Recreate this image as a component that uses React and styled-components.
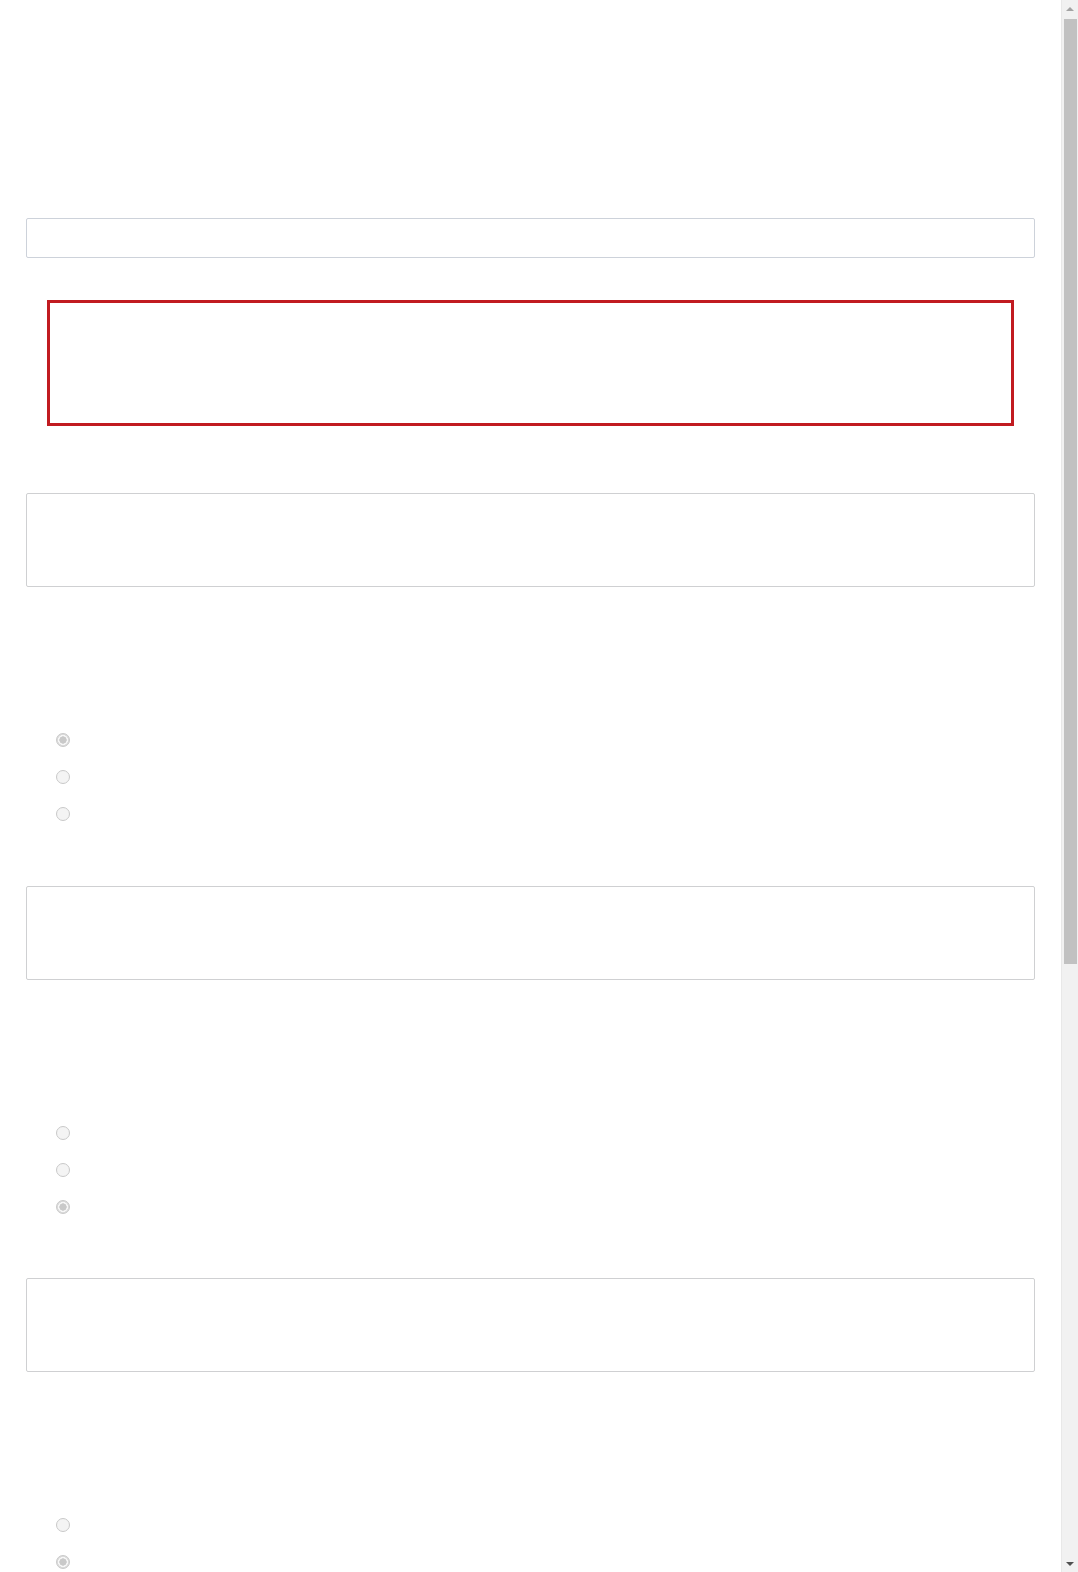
import React from "react";
import styled, { createGlobalStyle } from "styled-components";

const GlobalStyle = createGlobalStyle`
  html, body {
    margin: 0;
    padding: 0;
    background: #ffffff;
    font-family: "Open Sans", "Liberation Sans", Arial, sans-serif;
    color: #ffffff;
  }
  * { box-sizing: border-box; }
`;

const Page = styled.main`
  padding: 218px 43px 105px 26px;
  display: flex;
  flex-direction: column;
`;

const TextInput = styled.input`
  display: block;
  width: 100%;
  height: 40px;
  margin: 0;
  padding: 6px 12px;
  border: 1px solid #cdd2da;
  border-radius: 2px;
  background: #ffffff;
  font: inherit;
  outline: none;
`;

const AlertBox = styled.div`
  margin: 42px 21px 0 21px;
  height: 126px;
  border: 3px solid #c11b20;
  background: #ffffff;
`;

const Sections = styled.div`
  margin-top: 67px;
  display: flex;
  flex-direction: column;
  gap: 53px;
`;

const Section = styled.section`
  display: flex;
  flex-direction: column;
`;

const TextArea = styled.textarea`
  display: block;
  width: 100%;
  height: 94px;
  margin: 0;
  padding: 8px 12px;
  border: 1px solid #cfd0d2;
  border-radius: 2px;
  background: #ffffff;
  resize: none;
  font: inherit;
  outline: none;
`;

const RadioList = styled.div`
  margin-top: 134.5px;
  padding-left: 30px;
  display: flex;
  flex-direction: column;
`;

const RadioRow = styled.label`
  height: 37px;
  display: flex;
  align-items: center;
`;

const Radio = styled.input.attrs({ type: "radio", disabled: true })`
  appearance: none;
  -webkit-appearance: none;
  margin: 0;
  width: 14px;
  height: 14px;
  border-radius: 50%;
  border: 1px solid #c9c9c9;
  background: #f4f4f4;
  &:checked {
    background: radial-gradient(circle, #c9c9c9 0 3.4px, #f7f7f7 3.9px 4.8px, #dcdcdc 5.2px);
  }
`;

/* Fake browser scrollbar, drawn over the right edge of the viewport */
const ScrollTrack = styled.div`
  position: fixed;
  top: 0;
  right: 0;
  width: 17px;
  height: 100vh;
  background: #f1f1f1;
  border-left: 1px solid #e8e8e8;
  display: flex;
  flex-direction: column;
  align-items: center;
`;

const ArrowButton = styled.div`
  width: 100%;
  height: 17px;
  flex: none;
  display: flex;
  align-items: center;
  justify-content: center;
  &::before {
    content: "";
    width: 0;
    height: 0;
    border-left: 4px solid transparent;
    border-right: 4px solid transparent;
    ${({ $dir }) =>
      $dir === "up"
        ? "border-bottom: 4px solid #a3a3a3;"
        : "border-top: 4px solid #505050;"}
  }
`;

const TrackBody = styled.div`
  flex: 1;
  width: 100%;
  padding: 2px 1px 0 2px;
`;

const Thumb = styled.div`
  width: 100%;
  height: 945px;
  background: #c1c1c1;
`;

const sections = [0, 2, 1, 0, 2];

export default function App() {
  return (
    <>
      <GlobalStyle />
      <Page>
        <TextInput type="text" readOnly aria-label="input" />
        <AlertBox />
        <Sections>
          {sections.map((checked, s) => (
            <Section key={s}>
              <TextArea readOnly aria-label={`answer ${s + 1}`} />
              <RadioList>
                {[0, 1, 2].map((i) => (
                  <RadioRow key={i}>
                    <Radio name={`q${s}`} defaultChecked={i === checked} />
                  </RadioRow>
                ))}
              </RadioList>
            </Section>
          ))}
        </Sections>
      </Page>
      <ScrollTrack aria-hidden="true">
        <ArrowButton $dir="up" />
        <TrackBody>
          <Thumb />
        </TrackBody>
        <ArrowButton $dir="down" />
      </ScrollTrack>
    </>
  );
}
